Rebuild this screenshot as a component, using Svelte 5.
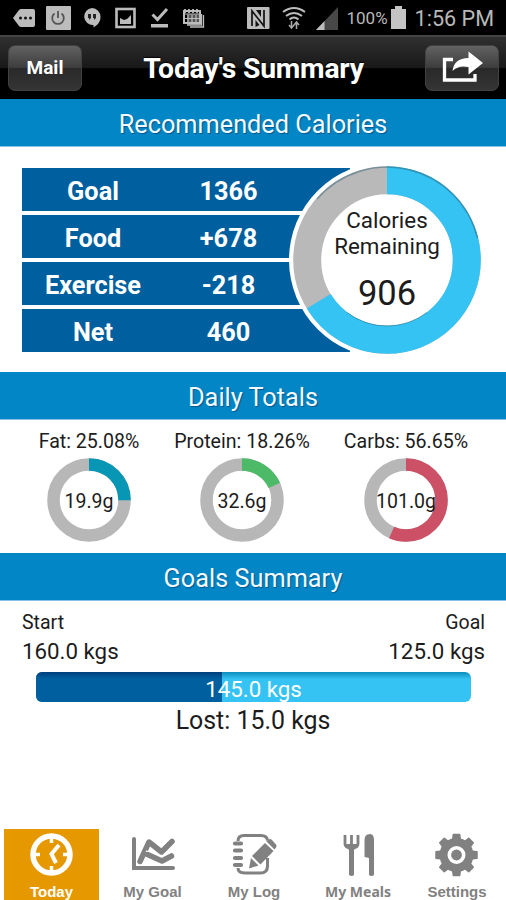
<script lang="ts">
  const calories = [
    { label: "Goal", value: "1366" },
    { label: "Food", value: "+678" },
    { label: "Exercise", value: "-218" },
    { label: "Net", value: "460" },
  ];

  const totals = [
    { label: "Fat", percent: 25.08, grams: "19.9g", color: "#0797b5" },
    { label: "Protein", percent: 18.26, grams: "32.6g", color: "#4dba68" },
    { label: "Carbs", percent: 56.65, grams: "101.0g", color: "#cc5167" },
  ];

  const start = 160;
  const goal = 125;
  const current = 145;
  const progress = ((start - current) / (start - goal)) * 100;

  const tabs = ["Today", "My Goal", "My Log", "My Meals", "Settings"];
  let active = "Today";

  const teeth = [0, 45, 90, 135, 180, 225, 270, 315];
</script>

<div class="app">
  <!-- Phone status bar -->
  <div class="status">
    <svg class="status-icons" width="220" height="35" viewBox="0 0 220 35" fill="#bcbcbc">
      <path d="M13 18l6-8q1-1 2-1h12q2 0 2 2v14q0 2-2 2H21q-1 0-2-1z" />
      <g fill="#111"><circle cx="20.5" cy="18" r="1.5" /><circle cx="25.5" cy="18" r="1.5" /><circle cx="30.5" cy="18" r="1.5" /></g>
      <rect x="46" y="6" width="25" height="24" rx="1" />
      <path d="M54.5 13.5a5.8 5.8 0 1 0 7 0M58 11v7" fill="none" stroke="#555" stroke-width="1.8" />
      <path d="M92 8a9 9 0 0 1 8.500 9c0 5-3 8-7 10.500v-2.500a8.500 8.500 0 1 1-1.500-17z" />
      <path d="M88 14h3v4l-2 2v-2h-1zM93 14h3v4l-2 2v-2h-1z" fill="#222" />
      <rect x="116.500" y="9" width="18" height="18" fill="none" stroke="#bcbcbc" stroke-width="2.600" />
      <path d="M120 24v-6l4 2 3-1 4-4v9z" />
      <path d="M152.500 14.500l5 5L167 9" fill="none" stroke="#bcbcbc" stroke-width="3" />
      <rect x="151" y="24" width="17" height="3.500" />
      <path d="M187 14h13v11h-13z" fill="#555" />
      <path d="M184 11h16v12h-16z" fill="none" stroke="#bcbcbc" stroke-width="2" />
      <path d="M184 14h16M185 18.500h14M188 15v8M192 15v8M196 15v8" fill="none" stroke="#bcbcbc" stroke-width="1.200" />
      <path d="M185 9v4M189 9v4M193 9v4M197 9v4" stroke="#bcbcbc" stroke-width="1.800" />
      <path d="M187 25h14.500V14M190 27h13.500V15" fill="none" stroke="#bcbcbc" stroke-width="1.300" />
    </svg>
    <div class="status-right">
      <svg width="94" height="35" viewBox="244 0 94 35" fill="#bcbcbc">
        <rect x="245" y="7" width="22.500" height="22" rx="1" />
        <path d="M250 26V11l12 15V10" fill="none" stroke="#111" stroke-width="1.700" />
        <path d="M253.500 27v-7l4 5zM259 10v7l-5-7z" fill="#111" />
        <path d="M281 12q11-8 22 0M284 16q8-6 16 0M287.500 19.500q4.500-4 9 0" fill="none" stroke="#bcbcbc" stroke-width="2" />
        <path d="M289.500 21v7M287 25l2.500 3 2.500-3M294.500 29v-7M292 25l2.500-3 2.500 3" fill="none" stroke="#aaa" stroke-width="1.500" />
        <path d="M336 7v23h-22z" fill="#484848" />
        <path d="M322.500 21v9h-8.500z" />
      </svg>
      <span class="battery-text">100%</span>
      <svg width="15" height="23" viewBox="0 0 15 23"><path d="M0 3h4V0h7v3h4v20H0z" fill="#c4c4c4" /></svg>
      <span class="clock">1:56 PM</span>
    </div>
  </div>

  <!-- Title bar -->
  <header>
    <button class="header-btn">Mail</button>
    <h1>Today's Summary</h1>
    <button class="header-btn" aria-label="Share">
      <svg width="44" height="34" viewBox="0 0 44 34" fill="#fff">
        <path d="M13 9.500H4.500v20.500h30.500V24" fill="none" stroke="#fff" stroke-width="3.300" />
        <path d="M12.500 21c1-8 6-13 16-13V1.500l14.500 11.500-14.500 11.500V17c-7-1.500-12 0-16 4z" />
      </svg>
    </button>
  </header>

  <h2>Recommended Calories</h2>
  <section class="calories">
    <div class="rows">
      {#each calories as row}
        <div class="row">
          <span class="row-label">{row.label}</span>
          <span class="row-value">{row.value}</span>
        </div>
      {/each}
    </div>
    <div class="remaining">
      <svg width="196" height="196" viewBox="0 0 196 196">
        <circle cx="98" cy="98" r="98" fill="#fff" />
        <circle cx="98" cy="98" r="79.800" fill="none" stroke="#b9b9b9" stroke-width="28" />
        <circle
          cx="98"
          cy="98"
          r="79.800"
          fill="none"
          stroke="#35c3f3"
          stroke-width="28"
          pathLength="100"
          stroke-dasharray="{(906 / 1366) * 100} 100"
          transform="rotate(-90 98 98)"
        />
        <path d="M28 37A93 93 0 0 1 188.500 76" fill="none" stroke="#285c70" stroke-opacity=".45" stroke-width="1.500" />
        <path d="M58 150.500A66 66 0 0 0 138 150.500" fill="none" stroke="#11647e" stroke-opacity=".5" stroke-width="1" />
      </svg>
      <div class="remaining-text">
        <span>Calories<br />Remaining</span>
        <strong>906</strong>
      </div>
    </div>
  </section>

  <h2>Daily Totals</h2>
  <section class="totals">
    {#each totals as item}
      <div class="total">
        <span class="total-label">{item.label}: {item.percent}%</span>
        <div class="ring">
          <svg width="84" height="84" viewBox="0 0 84 84">
            <circle cx="42" cy="42" r="35.500" fill="none" stroke="#b7b7b7" stroke-width="12.500" />
            <circle
              cx="42"
              cy="42"
              r="35.500"
              fill="none"
              stroke={item.color}
              stroke-width="12.500"
              pathLength="100"
              stroke-dasharray="{item.percent} 100"
              transform="rotate(-90 42 42)"
            />
          </svg>
          <span class="grams">{item.grams}</span>
        </div>
      </div>
    {/each}
  </section>

  <h2>Goals Summary</h2>
  <section class="goals">
    <div class="ends">
      <div>
        <div class="end-label">Start</div>
        <div class="end-value">{start.toFixed(1)} kgs</div>
      </div>
      <div class="end-right">
        <div class="end-label">Goal</div>
        <div class="end-value">{goal.toFixed(1)} kgs</div>
      </div>
    </div>
    <div class="bar">
      <div class="fill" style="width: {progress}%"></div>
      <span class="bar-text">{current.toFixed(1)} kgs</span>
    </div>
    <div class="lost">Lost: {(start - current).toFixed(1)} kgs</div>
  </section>

  <!-- Bottom tabs -->
  <nav>
    {#each tabs as tab}
      <button class="tab" class:active={active === tab} on:click={() => (active = tab)}>
        <svg width="48" height="48" viewBox="0 0 48 48" fill="currentColor">
          {#if tab === "Today"}
            <circle cx="23.500" cy="23.500" r="18.500" fill="none" stroke="currentColor" stroke-width="5.500" />
            <path d="M23.500 7v5M23.500 35v5M7 23.500h5M35 23.500h5" stroke="currentColor" stroke-width="3.500" />
            <path d="M31 14l-7.500 9 4.500 9" fill="none" stroke="currentColor" stroke-width="4" />
          {:else if tab === "My Goal"}
            <path d="M5 8v29h39" fill="none" stroke="currentColor" stroke-width="4" stroke-linecap="round" />
            <path d="M11 30.500l9-19.500 12.500 10L43 10.500" fill="none" stroke="currentColor" stroke-width="5.500" stroke-linecap="round" stroke-linejoin="round" />
            <path d="M17 20l17 8.500 11-6.500" fill="none" stroke="#fff" stroke-width="1.500" />
            <path d="M18.500 23.500l14.500 6.500 9.500-5" fill="none" stroke="currentColor" stroke-width="5.500" stroke-linecap="round" stroke-linejoin="round" />
          {:else if tab === "My Log"}
            <path d="M8 10q0-5.500 6-5.500h17q6 0 6.500 5M37.500 27v8q0 7-7 7H15q-7 0-7-5" fill="none" stroke="currentColor" stroke-width="3" />
            <path d="M5 12.500h6M5 19.500h6M5 27h6M5 34h6" stroke="currentColor" stroke-width="4.200" stroke-linecap="round" />
            <path d="M35 12l8.500 8-13 13.500-8.500-8.500zM36.500 10.500l2-2q1.500-1 3 0l4.500 5q1 1.500 0 3l-1.500 2zM21 27l7.500 7.500-9.500 3z" />
          {:else if tab === "My Meals"}
            <path d="M11 4v9q0 4 6.500 4T24 13V4M17.500 4v13" fill="none" stroke="currentColor" stroke-width="2.800" />
            <path d="M12 13h11v2.500l-3 3.500v25q-2 2-5 0V19l-3-3.500z" />
            <path d="M30.500 26V9q0-6 5.500-6 4 0 4 6v35q-2.500 2-5 0V27z" />
          {:else}
            {#each teeth as angle}
              <path d="M19.500 10l.8-6.500h6.400l.8 6.500z" stroke="currentColor" stroke-width="1.500" stroke-linejoin="round" transform="rotate({angle} 23.500 24)" />
            {/each}
            <circle cx="23.500" cy="24" r="13" fill="none" stroke="currentColor" stroke-width="8" />
            <circle cx="23.500" cy="24" r="5.400" />
          {/if}
        </svg>
        <span class:meals={tab === "My Meals"}>{tab}</span>
      </button>
    {/each}
  </nav>
</div>

<style>
  :global(body) {
    margin: 0;
    background: #fff;
  }

  .app {
    width: 506px;
    height: 900px;
    display: flex;
    flex-direction: column;
    overflow: hidden;
    background: #fff;
    color: #1c1c1c;
    font-family: Roboto, sans-serif;
  }

  button {
    padding: 0;
    border: none;
    font-family: inherit;
    cursor: pointer;
  }

  .status {
    height: 35px;
    display: flex;
    justify-content: space-between;
    background: #000;
    color: #b9b9b9;
  }

  .status-right {
    display: flex;
    align-items: center;
    padding-right: 12px;
  }

  .battery-text {
    width: 41px;
    margin: 1px 3px 0 7px;
    font-size: 17px;
    white-space: nowrap;
  }

  .clock {
    margin: 2px 0 0 9px;
    font-size: 21.6px;
    white-space: nowrap;
  }

  header {
    box-sizing: border-box;
    height: 64px;
    display: flex;
    align-items: center;
    justify-content: space-between;
    padding: 0 7px 0 8px;
    border-top: 2px solid #444;
    background: linear-gradient(#303030, #181818 50%, #000 51%, #000);
  }

  h1 {
    margin: 0;
    color: #fff;
    font-size: 28.3px;
    font-weight: 700;
    letter-spacing: -0.2px;
    text-shadow: 0 -1px 1px #000;
  }

  .header-btn {
    box-sizing: border-box;
    width: 74px;
    height: 46px;
    display: flex;
    align-items: center;
    justify-content: center;
    padding-bottom: 2px;
    border: 1px solid #414141;
    border-radius: 7px;
    background: linear-gradient(#626262, #3d3d3d 49%, #292929 51%, #353535);
    color: #fff;
    font-size: 19px;
    font-weight: 700;
  }

  h2 {
    box-sizing: border-box;
    flex: none;
    height: 48px;
    margin: 0;
    padding-top: 1px;
    border-bottom: 1px solid #8bc1e6;
    background: #0286c6;
    color: #f3faff;
    font-size: 25.3px;
    font-weight: 400;
    line-height: 49px;
    text-align: center;
    text-shadow: 1px 1px 1px #00598d;
  }

  .calories {
    height: 225px;
    display: flex;
    align-items: flex-start;
  }

  .rows {
    width: 350px;
    flex: none;
    display: grid;
    gap: 4px;
    padding: 21px 0 0 22px;
    box-sizing: border-box;
  }

  .row {
    box-sizing: border-box;
    height: 43px;
    display: flex;
    align-items: center;
    padding-top: 3px;
    background: #005f9e;
    color: #fff;
    font-size: 25.3px;
    font-weight: 700;
  }

  .row-label {
    width: 142px;
    text-align: center;
  }

  .row-value {
    width: 129px;
    text-align: center;
  }

  .remaining {
    position: relative;
    flex: none;
    margin: 15px 0 0 -61px;
  }

  .remaining svg,
  .ring svg {
    display: block;
  }

  .remaining-text {
    position: absolute;
    inset: 45px 0 0;
    display: flex;
    flex-direction: column;
    align-items: center;
    font-size: 22.4px;
    line-height: 26px;
    text-align: center;
  }

  .remaining-text strong {
    margin-top: 14px;
    font-size: 34.5px;
    font-weight: 400;
    line-height: 40px;
  }

  .totals {
    box-sizing: border-box;
    height: 133px;
    display: grid;
    grid-template-columns: 140px 166px 162px;
    padding-left: 19px;
  }

  .total {
    display: flex;
    flex-direction: column;
    align-items: center;
  }

  .total-label {
    height: 38px;
    font-size: 19.6px;
    line-height: 44px;
    white-space: nowrap;
  }

  .ring {
    position: relative;
  }

  .grams {
    position: absolute;
    inset: 0;
    display: flex;
    align-items: center;
    justify-content: center;
    padding-top: 2px;
    font-size: 19.5px;
  }

  .goals {
    height: 228px;
  }

  .ends {
    display: flex;
    justify-content: space-between;
    padding: 8px 21px 0 22px;
  }

  .end-right {
    text-align: right;
  }

  .end-label {
    height: 27px;
    font-size: 19.5px;
    line-height: 28px;
  }

  .end-value {
    font-size: 22.3px;
    line-height: 30px;
  }

  .bar {
    position: relative;
    height: 30px;
    margin: 6px 35px 0 36px;
    overflow: hidden;
    border-radius: 6px;
    background: linear-gradient(#0c8dbd, #35c3f3 24%, #35c3f3);
  }

  .fill {
    height: 100%;
    background: linear-gradient(#003f7e, #005f9e 22%, #005f9e);
  }

  .bar-text {
    position: absolute;
    inset: 0;
    color: #fff;
    font-size: 22.3px;
    line-height: 34px;
    text-align: center;
  }

  .lost {
    font-size: 24.9px;
    line-height: 38px;
    text-align: center;
  }

  nav {
    height: 71px;
    flex: none;
    display: grid;
    grid-template-columns: 95px 107px 96px 112px 86px;
    padding-left: 4px;
  }

  .tab {
    min-width: 0;
    display: flex;
    flex-direction: column;
    align-items: center;
    background: none;
    color: #818181;
    font-family: "Liberation Sans", Arial, sans-serif;
    font-size: 15px;
    font-weight: 700;
    line-height: 18px;
    white-space: nowrap;
  }

  .tab svg {
    width: 48px;
    height: 48px;
    margin: 2px 0 4px;
  }

  .active {
    background: #e69800;
    color: #fff;
  }

  .meals {
    font-family: "Noto Sans", sans-serif;
    font-size: 14px;
  }
</style>
